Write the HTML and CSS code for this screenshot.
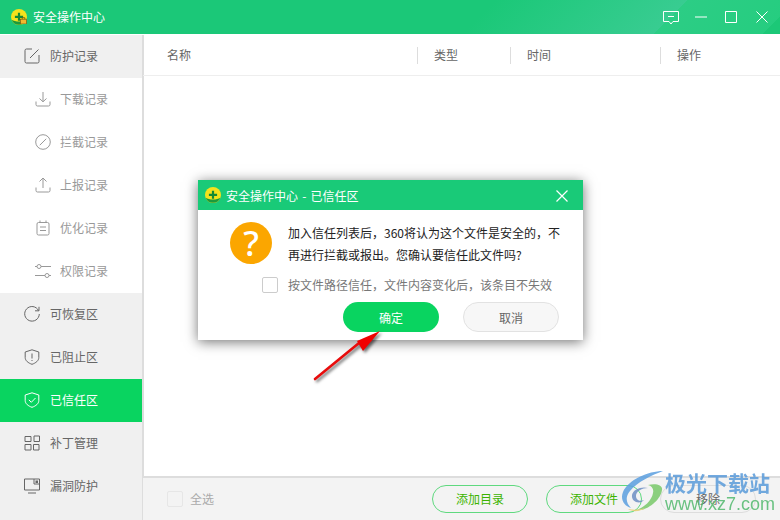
FILE: index.html
```html
<!DOCTYPE html>
<html lang="zh-CN">
<head>
<meta charset="utf-8">
<title>安全操作中心</title>
<link rel="stylesheet" href="styles.css">
</head>
<body>
<svg class="defs" width="0" height="0" aria-hidden="true">
  <symbol id="brand" viewBox="0 0 16 16">
    <circle cx="8" cy="8" r="8" fill="#f5e21c"/>
    <path d="M.6 10.8A8 8 0 0 0 15.4 10.8C12 13.2 4 13.2.6 10.8Z" fill="#1c9a3c"/>
    <path d="M6.9 3.800h2.200v3h3v2.200h-3v2.800H6.900V9h-3V6.800h3Z" fill="#168a34"/>
  </symbol>
</svg>

<header class="titlebar">
  <svg class="brand"><use href="#brand"/></svg>
  <svg class="brand-lock" viewBox="0 0 8 8"><rect x=".5" y="2.500" width="7" height="5.500" fill="#f1b92e" stroke="#7a5a10" stroke-width=".8"/><path d="M2.500 2.500V.8h3v1.700" fill="none" stroke="#7a5a10"/></svg>
  <span class="app-name">安全操作中心</span>
  <div class="win-controls">
    <svg viewBox="0 0 16 14" class="win-feedback"><path d="M.5.5h15v10h-5.500L8 13l-2-2.500H.5Z M5 5.500h6" fill="none" stroke="#fff"/></svg>
    <svg viewBox="0 0 12 12" class="win-btn"><path d="M0 6h12" stroke="#fff" fill="none"/></svg>
    <svg viewBox="0 0 12 12" class="win-btn"><path d="M.5.5h11v11H.5Z" stroke="#fff" fill="none"/></svg>
    <svg viewBox="0 0 12 12" class="win-btn win-close"><path d="M.5.500l11 11M11.500.500l-11 11" stroke="#fff" fill="none"/></svg>
  </div>
</header>

<div class="shell">
  <nav class="sidebar">
    <a class="nav-item">
      <svg viewBox="0 0 16 16" class="nav-icon"><path d="M8 1H2.500A1.500 1.500 0 0 0 1 2.500v11A1.500 1.500 0 0 0 2.500 15h11a1.500 1.500 0 0 0 1.500-1.500V7M14.500 1.500 6 10" fill="none" stroke="#666"/></svg>
      防护记录
    </a>
    <a class="nav-item sub">
      <svg viewBox="0 0 16 16" class="nav-icon"><path d="M8 1v9.500M4.500 7.500 8 10.800l3.500-3.300M1 10.500v3A1.500 1.500 0 0 0 2.500 15h11a1.500 1.500 0 0 0 1.500-1.500v-3" fill="none" stroke="#999"/></svg>
      下载记录
    </a>
    <a class="nav-item sub">
      <svg viewBox="0 0 16 16" class="nav-icon"><circle cx="8" cy="8" r="7.300" fill="none" stroke="#999"/><path d="M4.800 11.200 11.200 4.800" fill="none" stroke="#999"/></svg>
      拦截记录
    </a>
    <a class="nav-item sub">
      <svg viewBox="0 0 16 16" class="nav-icon"><path d="M8 11V1.200M4.500 4.500 8 1l3.500 3.500M1 10.500v3A1.500 1.500 0 0 0 2.500 15h11a1.500 1.500 0 0 0 1.500-1.500v-3" fill="none" stroke="#999"/></svg>
      上报记录
    </a>
    <a class="nav-item sub">
      <svg viewBox="0 0 16 16" class="nav-icon"><path d="M3.500 2.500h9A1.500 1.500 0 0 1 14 4v9.500a1.500 1.500 0 0 1-1.500 1.500h-9A1.500 1.500 0 0 1 2 13.500V4a1.500 1.500 0 0 1 1.500-1.500ZM5 .5v2M11 .5v2M5 7h6M5 10.500h6" fill="none" stroke="#999"/></svg>
      优化记录
    </a>
    <a class="nav-item sub">
      <svg viewBox="0 0 16 16" class="nav-icon"><circle cx="4" cy="3.500" r="2" fill="none" stroke="#999"/><circle cx="12" cy="12.500" r="2" fill="none" stroke="#999"/><path d="M0 3.500h2M6 3.500h10M0 12.500h10M14 12.500h2" fill="none" stroke="#999"/></svg>
      权限记录
    </a>
    <a class="nav-item">
      <svg viewBox="0 0 16 16" class="nav-icon"><path d="M14.500 4.500A7.300 7.300 0 1 0 15.300 8M15 .8v4h-4" fill="none" stroke="#666"/></svg>
      可恢复区
    </a>
    <a class="nav-item">
      <svg viewBox="0 0 16 16" class="nav-icon"><path d="M8 .8 14.800 3v5.500c0 3.200-3 5.500-6.800 6.800C4.200 14 1.200 11.700 1.200 8.500V3ZM8 4.500v5M8 11v1" fill="none" stroke="#666"/></svg>
      已阻止区
    </a>
    <a class="nav-item active">
      <svg viewBox="0 0 16 16" class="nav-icon"><path d="M8 .8 14.800 3v5.500c0 3.200-3 5.500-6.800 6.800C4.200 14 1.200 11.700 1.200 8.500V3ZM4.800 7.800 7.300 10.300l4.200-4.300" fill="none" stroke="#fff"/></svg>
      已信任区
    </a>
    <a class="nav-item">
      <svg viewBox="0 0 16 16" class="nav-icon"><path d="M1 1.500h6v5H1ZM10 1h5.500v5.500H10ZM1 9.500h6V15H1ZM9.500 9.500H15V15H9.500Z" fill="none" stroke="#666"/></svg>
      补丁管理
    </a>
    <a class="nav-item">
      <svg viewBox="0 0 16 16" class="nav-icon"><path d="M.5 1h15v11H.5ZM10 1v5h5.500M4 15h8" fill="none" stroke="#666"/><path d="M11.500 2.500h2.500v2.500h-2.500Z" fill="#666"/></svg>
      漏洞防护
    </a>
  </nav>

  <main class="content">
    <div class="table-head">
      <div class="col col-name">名称</div>
      <div class="col col-type">类型</div>
      <div class="col col-time">时间</div>
      <div class="col col-op">操作</div>
    </div>
    <div class="table-body"></div>
    <footer class="actions">
      <span class="check-all"><i class="box faint"></i>全选</span>
      <div class="action-btns">
        <button class="pill outline">添加目录</button>
        <button class="pill outline">添加文件</button>
        <button class="pill ghost">移除</button>
      </div>
    </footer>
  </main>
</div>

<section class="dialog">
  <header class="dialog-head">
    <svg class="dialog-brand"><use href="#brand"/></svg>
    <span class="dialog-title">安全操作中心 - 已信任区</span>
    <svg viewBox="0 0 12 12" class="dialog-close"><path d="M.5.500l11 11M11.500.500l-11 11" stroke="#fff" fill="none" stroke-width="1.200"/></svg>
  </header>
  <div class="dialog-body">
    <div class="question">?</div>
    <p class="message">加入信任列表后，360将认为这个文件是安全的，不再进行拦截或报出。您确认要信任此文件吗?</p>
  </div>
  <label class="path-option"><i class="box"></i><span>按文件路径信任，文件内容变化后，该条目不失效</span></label>
  <div class="dialog-btns">
    <button class="pill solid">确定</button>
    <button class="pill cancel">取消</button>
  </div>
</section>

<svg class="pointer" viewBox="0 0 80 64" width="80" height="64">
  <path d="M5 59 49 23" stroke="#e80c0c" stroke-width="2.600" stroke-linecap="round" fill="none"/>
  <path d="M70 11 47 21 53 31Z" fill="#f00000"/>
</svg>

<div class="watermark">
  <svg viewBox="0 0 44 46" class="wm-logo">
    <path d="M43 1C28 1 8 10 3 22 0 29 4 36 11 38 6 33 5 27 10 21 17 12 32 5 43 1Z" fill="#5b9fe0"/>
    <path d="M12 25C13 19 22 16 28 18 22 18 16 21 16 26 16 30 20 32 24 30 20 35 11 32 12 25Z" fill="#6e8fc4"/>
    <path d="M28 15C36 13 43 15 42 20 41 30 26 42 16 40 24 38 32 30 33 23 34 19 32 16 28 15Z" fill="#79c96a"/>
    <path d="M8 39C12 42 20 42 25 38 20 40 14 40 8 39Z" fill="#e6cf70"/>
  </svg>
  <div class="wm-text">
    <span class="wm-cn">极光下载站</span>
    <span class="wm-url">www.xz7.com</span>
  </div>
</div>
</body>
</html>
```

FILE: styles.css
```css
* { box-sizing: border-box; }

html, body {
  margin: 0;
  height: 520px;
  overflow: hidden;
}

body {
  position: relative;
  display: flex;
  flex-direction: column;
  background: #fff;
  font: 12px/1.5 "Noto Sans CJK SC", "Noto Sans", sans-serif;
  color: #666;
}

.defs { position: absolute; }

/* Title bar */
.titlebar {
  position: relative;
  flex: 0 0 34px;
  display: flex;
  align-items: center;
  padding-left: 11px;
  color: #fff;
  background: linear-gradient(135deg,
    #1bc878 351px,
    #38cc91 486px,
    #2ccd85 486px,
    #26cd80 563px,
    #1cc877 563px);
}
.brand { width: 16px; height: 16px; }
.brand-lock { position: absolute; left: 20px; top: 17px; width: 7px; height: 7px; }
.app-name { margin-left: 6px; }
.win-controls {
  margin-left: auto;
  display: flex;
  align-items: center;
  gap: 18px;
  padding-right: 12px;
}
.win-feedback { width: 16px; height: 14px; margin: 2px -2px 0 0; }
.win-btn { width: 12px; height: 12px; }
.win-close { margin-left: 1px; }

.shell {
  flex: 1;
  display: flex;
  min-height: 0;
  padding-top: 1px;
}

/* Sidebar */
.sidebar {
  flex: 0 0 144px;
  border-right: 2px solid #ddd;
  background: #f0f0f0;
  display: flex;
  flex-direction: column;
}
.nav-item {
  flex: 0 0 43px;
  display: flex;
  align-items: center;
  gap: 10px;
  padding: 0 0 2px 24px;
  color: #666;
}
.nav-icon { width: 16px; height: 16px; flex: none; }
.nav-item.sub {
  padding-left: 35px;
  gap: 9px;
  background: #fff;
  color: #999;
}
.nav-item.active { background: #09d460; color: #fff; }

/* Record table */
.content {
  flex: 1;
  min-width: 0;
  display: flex;
  flex-direction: column;
  margin-left: -1px;
}
.table-head {
  flex: 0 0 41px;
  display: grid;
  grid-template-columns: 274px 93px 150px 1fr;
  align-items: center;
  border-bottom: 1px solid #eee;
}
.col {
  height: 17px;
  line-height: 15px;
  padding-left: 16px;
  border-left: 1px solid #ddd;
}
.col-name { padding-left: 24px; border-left: 0; }
.table-body { flex: 1; }

.actions {
  flex: 0 0 44px;
  display: flex;
  align-items: center;
  padding: 0 24px;
  border-top: 2px solid #ddd;
  background: #f3f3f3;
}
.check-all { display: flex; align-items: center; gap: 7px; color: #aaa; }
.action-btns { margin-left: auto; display: flex; gap: 18px; }

.box {
  width: 16px;
  height: 16px;
  border: 1px solid #ccc;
  border-radius: 2px;
  background: #fff;
}
.box.faint { border-color: #e6e6e6; background: #f3f3f3; }

.pill {
  width: 96px;
  height: 28px;
  padding: 0;
  border-radius: 14px;
  font: inherit;
  background: transparent;
  cursor: pointer;
}
.outline { border: 1px solid #5fd97f; color: #3cb300; }
.ghost { border: 1px solid #ddd; color: #666; }

/* Confirmation dialog */
.dialog {
  position: absolute;
  left: 198px;
  top: 180px;
  width: 385px;
  height: 160px;
  background: #fff;
  box-shadow: 0 2px 12px rgba(0,0,0,.55);
  display: flex;
  flex-direction: column;
}
.dialog-head {
  flex: 0 0 30px;
  display: flex;
  align-items: center;
  padding: 0 15px 0 7px;
  gap: 5px;
  color: #fff;
  background: #19ca78;
}
.dialog-brand { width: 16px; height: 16px; }
.dialog-title { padding-top: 1px; word-spacing: 1.500px; }
.dialog-close { width: 12px; height: 12px; margin: 1px 0 0 auto; }
.dialog-body {
  display: flex;
  gap: 16px;
  padding: 12px 20px 0 32px;
}
.question {
  flex: none;
  width: 42px;
  height: 42px;
  border-radius: 50%;
  background: #fba600;
  color: #fff;
  font: 500 35px/42px "Noto Sans", sans-serif;
  text-align: center;
}
.message {
  margin: 0;
  line-height: 22px;
  color: #222;
}
.path-option {
  display: flex;
  align-items: center;
  gap: 10px;
  padding-left: 64px;
  margin-top: 10px;
  color: #777;
}
.dialog-btns {
  display: flex;
  gap: 24px;
  padding-left: 145px;
  margin-top: 8px;
}
.dialog-btns .pill { height: 30px; border-radius: 15px; padding-top: 1px; }
.solid { border: 0; background: #09d460; color: #fff; }
.cancel { border: 1px solid #e2e2e2; background: #f7f7f7; color: #666; }

/* Annotation arrow laid over the dialog */
.pointer {
  position: absolute;
  left: 310px;
  top: 320px;
  filter: drop-shadow(2px 2px 1.500px rgba(0,0,0,.55));
}

/* Site mark in the corner */
.watermark {
  position: absolute;
  left: 620px;
  top: 470px;
  display: flex;
  gap: 1px;
  opacity: .85;
}
.wm-logo { width: 44px; height: 46px; }
.wm-text { display: flex; flex-direction: column; }
.wm-cn {
  font: bold 21px/25px "Noto Sans CJK SC", sans-serif;
  color: #5a9bda;
  white-space: nowrap;
}
.wm-url {
  font: 18px/18px "Liberation Sans", sans-serif;
  color: #52b96e;
  white-space: nowrap;
}
```
